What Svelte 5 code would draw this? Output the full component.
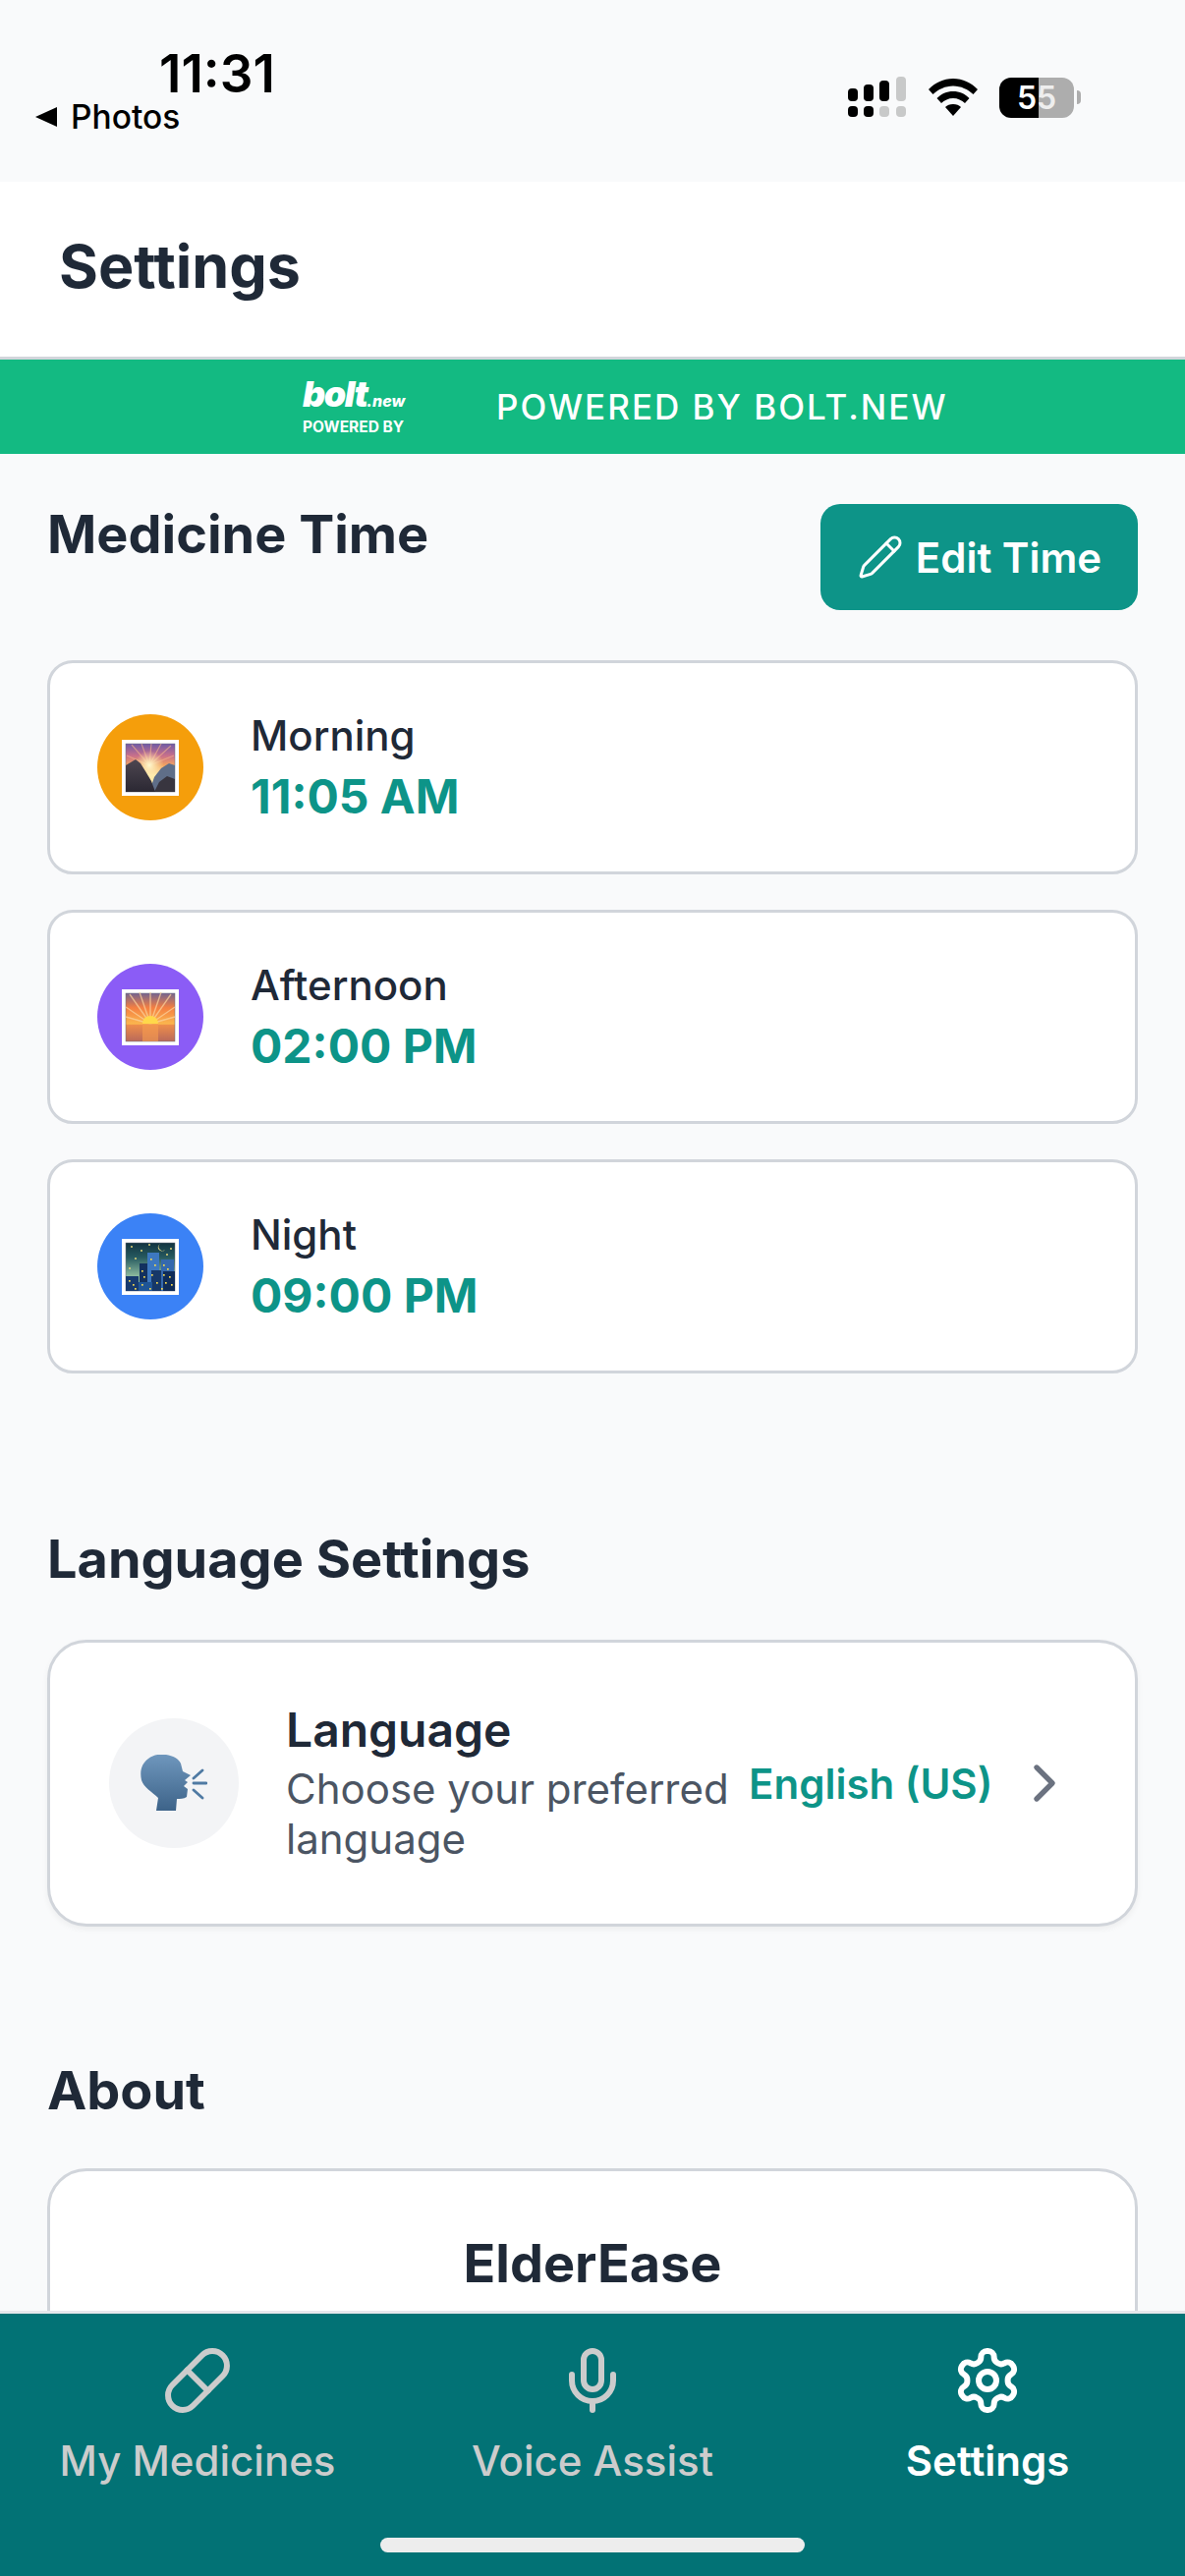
<script>
  const times = [
    { label: "Morning", time: "11:05 AM", tone: "morning" },
    { label: "Afternoon", time: "02:00 PM", tone: "afternoon" },
    { label: "Night", time: "09:00 PM", tone: "night" },
  ];
  const stars = [[10,8],[20,12],[28,6],[50,10],[14,20],[46,16],[8,30]];
  const windows = [[7,42],[11,46],[13,50],[20,32],[22,38],[20,46],[29,20],[33,26],[30,36],[35,44],[42,26],[46,30],[42,36],[48,38],[44,44],[50,46],[28,50],[40,50]];
  const rays = ["M29 35 8 5", "M29 35 18 3", "M29 35 29 3", "M29 35 40 3", "M29 35 50 5", "M29 35 4 18", "M29 35 54 18", "M29 35 4 28", "M29 35 54 28"];
</script>

<div class="phone">
  <div class="status">
    <div class="status-left">
      <span class="clock">11:31</span>
      <span class="back"><i class="back-arrow"></i>Photos</span>
    </div>
    <div class="status-right">
      <svg width="60" height="42" viewBox="0 0 60 42" aria-hidden="true">
        <g fill="#000">
          <rect x="0" y="12" width="10" height="13" rx="4" />
          <rect x="16" y="8" width="10" height="17" rx="4" />
          <rect x="32" y="4" width="10" height="21" rx="4" />
          <rect x="0" y="30" width="10" height="11" rx="4" />
          <rect x="16" y="30" width="10" height="11" rx="4" />
        </g>
        <g fill="#c8c9c9">
          <rect x="49" y="0" width="10" height="25" rx="4" />
          <rect x="32" y="30" width="10" height="11" rx="4" />
          <rect x="49" y="30" width="10" height="11" rx="4" />
        </g>
      </svg>
      <svg class="wifi" width="50" height="38" viewBox="0 0 50 38" aria-hidden="true">
        <path d="M25 0C15 0 7 4 0 11l4.500 5C10 11 17 7.500 25 7.500S40 11 45.500 16L50 11C43 4 35 0 25 0Z" />
        <path d="M25 13c-6.500 0-12 2.500-16.500 7l4.500 5c3-3 7.500-5 12-5s9 2 12 5l4.500-5C37 15.500 31.500 13 25 13Z" />
        <path d="M25 26c-3.500 0-6 1-8 3l8 9 8-9c-2-2-4.500-3-8-3Z" />
      </svg>
      <div class="battery">
        <div class="cell"><span class="cell-dark">5</span><span class="cell-light">5</span></div>
        <i class="nub"></i>
      </div>
    </div>
  </div>

  <header class="top"><h1>Settings</h1></header>

  <div class="banner">
    <div class="logo">
      <span class="logo-mark">bolt<small>.new</small></span>
      <span class="logo-sub">POWERED BY</span>
    </div>
    <span class="banner-text">POWERED BY BOLT.NEW</span>
  </div>

  <main>
    <section class="times">
      <div class="section-head">
        <h2>Medicine Time</h2>
        <button class="edit">
          <svg width="48" height="48" viewBox="0 0 24 24" fill="none" stroke="currentColor" stroke-width="1.500" stroke-linecap="round" stroke-linejoin="round" aria-hidden="true">
            <path d="M21.174 6.812a1 1 0 0 0-3.986-3.987L3.842 16.174a2 2 0 0 0-.5.83l-1.321 4.352a.5.5 0 0 0 .623.622l4.353-1.32a2 2 0 0 0 .83-.497z" />
            <path d="m15 5 4 4" />
          </svg>
          Edit Time
        </button>
      </div>

      <div class="time-list">
        {#each times as t}
          <div class="card time-card">
            <div class={["badge", t.tone]}>
              <svg class="pic" width="58" height="57" viewBox="0 0 58 57" aria-hidden="true">
                <defs>
                  <linearGradient id="sky-morning" x1="0" y1="0" x2="0" y2="1">
                    <stop offset="0" stop-color="#6f5aa6" />
                    <stop offset="0.25" stop-color="#c9708a" />
                    <stop offset="0.45" stop-color="#f2a35f" />
                    <stop offset="0.65" stop-color="#ffe9a8" />
                  </linearGradient>
                  <linearGradient id="sky-afternoon" x1="0" y1="0" x2="0" y2="1">
                    <stop offset="0" stop-color="#74648f" />
                    <stop offset="0.3" stop-color="#f47f42" />
                    <stop offset="0.64" stop-color="#fbb74e" />
                    <stop offset="0.65" stop-color="#ef8e4a" />
                    <stop offset="1" stop-color="#b9695a" />
                  </linearGradient>
                  <linearGradient id="sky-night" x1="0" y1="0" x2="0" y2="1">
                    <stop offset="0" stop-color="#12333f" />
                    <stop offset="0.3" stop-color="#26595f" />
                    <stop offset="0.7" stop-color="#8dbb9f" />
                  </linearGradient>
                  <radialGradient id="glow">
                    <stop offset="0" stop-color="#fff8cf" />
                    <stop offset="1" stop-color="#fff0b0" stop-opacity="0" />
                  </radialGradient>
                  <linearGradient id="rock" x1="0" y1="0" x2="0" y2="1">
                    <stop offset="0" stop-color="#4d4650" />
                    <stop offset="1" stop-color="#2b2833" />
                  </linearGradient>
                </defs>
                <rect width="58" height="57" fill="#fff" />
                <rect x="4" y="4" width="50" height="49" fill={`url(#sky-${t.tone})`} stroke="#6b7280" stroke-width="0.500" />
                {#if t.tone === "morning"}
                  <g stroke="#f7b58a" stroke-width="1.200" opacity="0.6">
                    <path d="M28 26 10 5M28 26 20 4M28 26 30 4M28 26 40 4M28 26 50 6M28 26 5 16M28 26 53 16" />
                  </g>
                  <circle cx="28" cy="26" r="15" fill="url(#glow)" />
                  <path d="M54 53V26l-6-2-8 5-7 9-5 15Z" fill="#5f6e88" />
                  <path d="M33 53l5-10 8-6 8 3v13Z" fill="#38353f" />
                  <path d="M4 53V26l5-3 5-3 5 4 5 8 6 10 4 11Z" fill="url(#rock)" />
                {:else if t.tone === "afternoon"}
                  <g stroke="#fbd09a" stroke-width="1.400" opacity="0.75">
                    {#each rays as r}
                      <path d={r} />
                    {/each}
                  </g>
                  <path d="M21 35a8 8 0 0 1 16 0Z" fill="#ffd84a" />
                  <rect x="21" y="35" width="16" height="18" fill="#f59a4e" opacity="0.65" />
                {:else}
                  {#each stars as s}
                    <circle cx={s[0]} cy={s[1]} r="0.900" fill="#f7e27a" />
                  {/each}
                  <path d="M39 5a4 4 0 1 0 5 6 3.500 3.500 0 0 1-5-6Z" fill="#fbe58a" />
                  <rect x="26" y="14" width="12" height="39" fill="#3d78c0" />
                  <rect x="40" y="21" width="13" height="32" fill="#3569ae" />
                  <rect x="18" y="25" width="8" height="28" fill="#13315f" />
                  <rect x="4" y="38" width="13" height="15" fill="#173a6e" />
                  <rect x="30" y="32" width="10" height="21" fill="#163868" />
                  <rect x="42" y="33" width="12" height="20" fill="#0f2c58" />
                  <rect x="17" y="44" width="14" height="9" fill="#1f5596" />
                  {#each windows as w}
                    <rect x={w[0]} y={w[1]} width="1.700" height="1.700" fill="#f5d94e" />
                  {/each}
                {/if}
              </svg>
            </div>
            <div class="time-text">
              <span class="time-label">{t.label}</span>
              <span class="time-value">{t.time}</span>
            </div>
          </div>
        {/each}
      </div>
    </section>

    <section class="lang">
      <h2>Language Settings</h2>
      <div class="card lang-card">
        <div class="lang-icon">
          <svg width="68" height="58" viewBox="0 0 68 58" aria-hidden="true">
            <defs>
              <linearGradient id="head" x1="0" y1="0" x2="0" y2="1">
                <stop offset="0" stop-color="#6f97bd" />
                <stop offset="1" stop-color="#3d6389" />
              </linearGradient>
            </defs>
            <path d="M16 57l2-13C12 38 3 33 1 26-1 17 1 9 8 4 13 0 20-1 26 0c7 1 13 4 15 9l2 8 8 4-6 5 3 2-4 4 4 3-1 8c-3 2-7 2-10 2l-1 12Z" fill="url(#head)" />
            <g stroke="#4f7aa3" stroke-width="2.800" stroke-linecap="round">
              <path d="M54 24l9-8M54 29h13M54 36l9 8" />
            </g>
          </svg>
        </div>
        <div class="lang-text">
          <span class="lang-title">Language</span>
          <span class="lang-sub">Choose your preferred language</span>
        </div>
        <span class="lang-value">English (US)</span>
        <svg class="chev" width="64" height="64" viewBox="0 0 24 24" fill="none" stroke="#6b7280" stroke-width="2" stroke-linecap="round" stroke-linejoin="round" aria-hidden="true">
          <path d="m9 18 6-6-6-6" />
        </svg>
      </div>
    </section>

    <section class="about">
      <h2>About</h2>
      <div class="card about-card">
        <span class="app-name">ElderEase</span>
      </div>
    </section>
  </main>

  <nav>
    <div class="tabs">
      <div class="tab">
        <svg width="72" height="72" viewBox="0 0 24 24" fill="none" stroke="currentColor" stroke-width="2" stroke-linecap="round" stroke-linejoin="round" aria-hidden="true">
          <path d="m10.500 20.500 10-10a4.950 4.950 0 1 0-7-7l-10 10a4.950 4.950 0 1 0 7 7Z" />
          <path d="m8.500 8.500 7 7" />
        </svg>
        <span>My Medicines</span>
      </div>
      <div class="tab">
        <svg width="72" height="72" viewBox="0 0 24 24" fill="none" stroke="currentColor" stroke-width="2" stroke-linecap="round" stroke-linejoin="round" aria-hidden="true">
          <path d="M12 2a3 3 0 0 0-3 3v7a3 3 0 0 0 6 0V5a3 3 0 0 0-3-3Z" />
          <path d="M19 10v2a7 7 0 0 1-14 0v-2" />
          <path d="M12 19v3" />
        </svg>
        <span>Voice Assist</span>
      </div>
      <div class="tab active">
        <svg width="72" height="72" viewBox="0 0 24 24" fill="none" stroke="currentColor" stroke-width="2" stroke-linecap="round" stroke-linejoin="round" aria-hidden="true">
          <path d="M12.220 2h-.44a2 2 0 0 0-2 2v.18a2 2 0 0 1-1 1.730l-.43.25a2 2 0 0 1-2 0l-.15-.08a2 2 0 0 0-2.730.73l-.22.38a2 2 0 0 0 .73 2.730l.15.1a2 2 0 0 1 1 1.720v.51a2 2 0 0 1-1 1.740l-.15.09a2 2 0 0 0-.73 2.730l.22.38a2 2 0 0 0 2.730.73l.15-.08a2 2 0 0 1 2 0l.43.25a2 2 0 0 1 1 1.730V20a2 2 0 0 0 2 2h.44a2 2 0 0 0 2-2v-.18a2 2 0 0 1 1-1.730l.43-.25a2 2 0 0 1 2 0l.15.08a2 2 0 0 0 2.730-.73l.22-.39a2 2 0 0 0-.73-2.730l-.15-.08a2 2 0 0 1-1-1.740v-.5a2 2 0 0 1 1-1.740l.15-.09a2 2 0 0 0 .73-2.730l-.22-.38a2 2 0 0 0-2.730-.73l-.15.08a2 2 0 0 1-2 0l-.43-.25a2 2 0 0 1-1-1.730V4a2 2 0 0 0-2-2z" />
          <circle cx="12" cy="12" r="3" />
        </svg>
        <span>Settings</span>
      </div>
    </div>
    <div class="home-bar"></div>
  </nav>
</div>

<style>
  :global(body) {
    margin: 0;
    background: #f9fafb;
  }
  .phone {
    width: 1206px;
    height: 2622px;
    display: flex;
    flex-direction: column;
    overflow: hidden;
    background: #f9fafb;
    font-family: Inter, "Liberation Sans", sans-serif;
    color: #1f2937;
  }
  h1, h2 {
    margin: 0;
  }
  .status {
    height: 185px;
    flex: none;
    display: flex;
    justify-content: space-between;
    align-items: flex-start;
    box-sizing: border-box;
    padding: 47px 0 0 36px;
    color: #000;
  }
  .status-left {
    display: flex;
    flex-direction: column;
  }
  .clock {
    font-size: 53px;
    font-weight: 600;
    line-height: 56px;
    margin-left: 126px;
  }
  .back {
    display: flex;
    align-items: center;
    gap: 14px;
    font-size: 33.500px;
    font-weight: 500;
    line-height: 40px;
    margin-top: -4px;
  }
  .back-arrow {
    width: 0;
    height: 0;
    border-top: 10px solid transparent;
    border-bottom: 10px solid transparent;
    border-right: 22px solid #000;
  }
  .status-right {
    display: flex;
    align-items: center;
    gap: 20px;
    margin: 31px 106px 0 0;
  }
  .wifi {
    fill: #000;
    margin-left: 2px;
  }
  .battery {
    display: flex;
    align-items: center;
    margin-left: 2px;
  }
  .cell {
    width: 76px;
    height: 41px;
    border-radius: 12px;
    background: linear-gradient(90deg, #000 0 40px, #adadad 40px);
    font-size: 32px;
    font-weight: 600;
    line-height: 41px;
    display: flex;
    justify-content: center;
    color: #fff;
  }
  .cell-dark {
    color: #fff;
  }
  .cell-light {
    color: #eee;
  }
  .nub {
    width: 4px;
    height: 14px;
    margin-left: 3px;
    background: #adadad;
    border-radius: 0 4px 4px 0;
  }
  .top {
    height: 178px;
    flex: none;
    box-sizing: border-box;
    background: #fff;
    display: flex;
    align-items: center;
    padding: 0 0 6px 60px;
  }
  h1 {
    font-size: 61px;
    font-weight: 700;
  }
  .banner {
    height: 99px;
    flex: none;
    box-sizing: border-box;
    border-top: 3px solid #d1d5db;
    background: #13ba82;
    color: #fff;
    display: flex;
    align-items: center;
    padding-left: 308px;
    gap: 94px;
  }
  .logo {
    display: flex;
    flex-direction: column;
    align-items: flex-start;
    width: 103px;
  }
  .logo-mark {
    font-size: 36px;
    font-weight: 900;
    font-style: italic;
    line-height: 34px;
    letter-spacing: -1.500px;
  }
  .logo-mark small {
    font-size: 16px;
    font-weight: 800;
    letter-spacing: 0;
  }
  .logo-sub {
    font-size: 15.500px;
    font-weight: 700;
    line-height: 20px;
    white-space: nowrap;
  }
  .banner-text {
    font-size: 35px;
    font-weight: 500;
    letter-spacing: 2px;
    white-space: nowrap;
  }
  main {
    flex: 1;
    min-height: 0;
    overflow: hidden;
    box-sizing: border-box;
    padding: 51px 48px 0;
  }
  h2 {
    font-size: 54px;
    font-weight: 700;
    line-height: 62px;
  }
  .section-head {
    display: flex;
    justify-content: space-between;
    align-items: flex-start;
  }
  .edit {
    height: 108px;
    width: 323px;
    border: none;
    border-radius: 20px;
    background: #0d9488;
    color: #fff;
    font: 600 42px Inter, sans-serif;
    display: flex;
    align-items: center;
    justify-content: center;
    gap: 12px;
    padding: 0;
  }
  .time-list {
    display: flex;
    flex-direction: column;
    gap: 36px;
    margin-top: 51px;
  }
  .card {
    box-sizing: border-box;
    background: #fff;
    border: 3px solid #d1d5db;
    border-radius: 26px;
  }
  .time-card {
    height: 218px;
    display: flex;
    align-items: center;
    padding-left: 48px;
    gap: 48px;
  }
  .badge {
    width: 108px;
    height: 108px;
    border-radius: 50%;
    display: flex;
    align-items: center;
    justify-content: center;
    flex: none;
  }
  .morning {
    background: #f59e0b;
  }
  .afternoon {
    background: #8b5cf6;
  }
  .night {
    background: #3b82f6;
  }
  .time-text {
    display: flex;
    flex-direction: column;
    gap: 4px;
  }
  .time-label {
    font-size: 42px;
    font-weight: 500;
    line-height: 56px;
  }
  .time-value {
    font-size: 48px;
    font-weight: 700;
    line-height: 60px;
    color: #0d9488;
  }
  .lang {
    margin-top: 158px;
  }
  .lang-card {
    height: 292px;
    margin-top: 51px;
    display: flex;
    align-items: center;
    padding: 0 60px;
    box-shadow: 0 3px 6px rgba(0, 0, 0, 0.05);
    border-radius: 40px;
  }
  .lang-icon {
    width: 132px;
    height: 132px;
    border-radius: 50%;
    background: #f3f4f6;
    display: flex;
    align-items: center;
    justify-content: center;
    flex: none;
  }
  .lang-text {
    display: flex;
    flex-direction: column;
    gap: 6px;
    width: 465px;
    margin-left: 48px;
    flex: none;
  }
  .lang-title {
    font-size: 48px;
    font-weight: 600;
    line-height: 56px;
  }
  .lang-sub {
    font-size: 42px;
    line-height: 51px;
    color: #4b5563;
  }
  .lang-value {
    margin-left: 6px;
    font-size: 42px;
    font-weight: 600;
    color: #0d9488;
    white-space: nowrap;
  }
  .chev {
    margin-left: auto;
  }
  .about {
    margin-top: 136px;
  }
  .about-card {
    height: 300px;
    margin-top: 48px;
    display: flex;
    justify-content: center;
    padding-top: 62px;
    border-radius: 40px;
  }
  .app-name {
    font-size: 54px;
    font-weight: 700;
    line-height: 64px;
  }
  nav {
    height: 270px;
    flex: none;
    box-sizing: border-box;
    border-top: 3px solid #e5e7eb;
    background: #027275;
    display: flex;
    flex-direction: column;
    align-items: center;
    padding-top: 32px;
    position: relative;
  }
  .tabs {
    width: 100%;
    display: grid;
    grid-template-columns: repeat(3, 1fr);
  }
  .tab {
    display: flex;
    flex-direction: column;
    align-items: center;
    gap: 14px;
    color: #cccccc;
    font-size: 42px;
    font-weight: 500;
    line-height: 64px;
  }
  .active {
    color: #fff;
    font-weight: 600;
  }
  .home-bar {
    position: absolute;
    left: 387px;
    bottom: 24px;
    width: 432px;
    height: 15px;
    border-radius: 8px;
    background: #ededed;
  }
</style>
